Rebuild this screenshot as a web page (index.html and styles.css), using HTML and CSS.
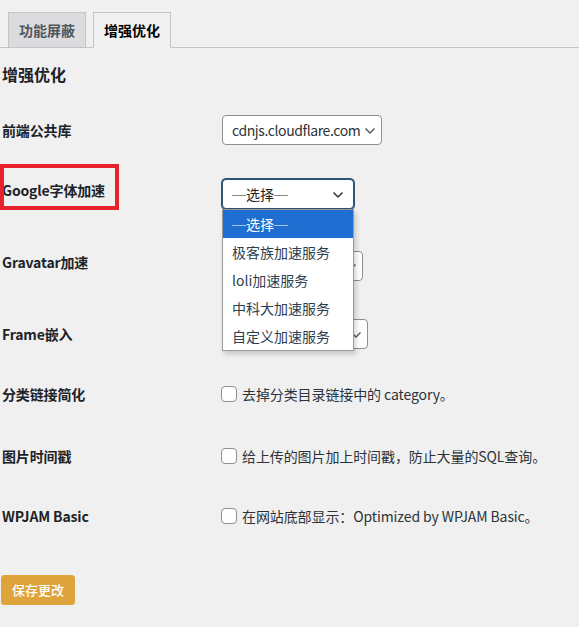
FILE: index.html
```html
<!DOCTYPE html>
<html lang="zh-CN">
<head>
<meta charset="utf-8">
<title>增强优化</title>
<link rel="stylesheet" href="styles.css">
</head>
<body>
<div class="wrap">
  <nav class="nav-tabs">
    <a class="nav-tab">功能屏蔽</a>
    <a class="nav-tab active">增强优化</a>
  </nav>
  <h2 class="section-title">增强优化</h2>
  <div class="form">
    <div class="row h60">
      <div class="label">前端公共库</div>
      <div class="field">
        <div class="select w160"><span class="tight">cdnjs.cloudflare.com</span><svg class="chev" width="12" height="8" viewBox="0 0 12 8"><polyline points="1.5,1.5 6,6 10.5,1.5" fill="none" stroke="#50575e" stroke-width="1.4"/></svg></div>
      </div>
    </div>
    <div class="row h72 marked">
      <div class="label">Google字体加速</div>
      <div class="field low">
        <div class="select w132 focused"><span><span class="dash">─</span>选择<span class="dash">─</span></span><svg class="chev" width="12" height="8" viewBox="0 0 12 8"><polyline points="1.5,1.5 6,6 10.5,1.5" fill="none" stroke="#2c3338" stroke-width="1.5"/></svg>
          <ul class="dropdown">
            <li class="selected"><span class="dash">─</span>选择<span class="dash">─</span></li>
            <li>极客族加速服务</li>
            <li>loli加速服务</li>
            <li>中科大加速服务</li>
            <li>自定义加速服务</li>
          </ul>
        </div>
      </div>
      <div class="highlight-box"></div>
    </div>
    <div class="row h72">
      <div class="label">Gravatar加速</div>
      <div class="field low">
        <div class="select w141"><svg class="chev" width="12" height="8" viewBox="0 0 12 8"><polyline points="1.5,1.5 6,6 10.5,1.5" fill="none" stroke="#50575e" stroke-width="1.4"/></svg></div>
      </div>
    </div>
    <div class="row h60">
      <div class="label">Frame嵌入</div>
      <div class="field">
        <div class="select w146"><svg class="chev" width="12" height="8" viewBox="0 0 12 8"><polyline points="1.5,1.5 6,6 10.5,1.5" fill="none" stroke="#50575e" stroke-width="1.4"/></svg></div>
      </div>
    </div>
    <div class="row h62">
      <div class="label">分类链接简化</div>
      <div class="field check">
        <span class="checkbox"></span><span class="check-text">去掉分类目录链接中的 category。</span>
      </div>
    </div>
    <div class="row h60">
      <div class="label">图片时间戳</div>
      <div class="field check">
        <span class="checkbox"></span><span class="check-text">给上传的图片加上时间戳，防止大量的SQL查询。</span>
      </div>
    </div>
    <div class="row h60">
      <div class="label">WPJAM Basic</div>
      <div class="field check">
        <span class="checkbox"></span><span class="check-text">在网站底部显示：Optimized by WPJAM Basic。</span>
      </div>
    </div>
  </div>
  <div class="submit">
    <button class="button-primary">保存更改</button>
  </div>
</div>
</body>
</html>
```

FILE: styles.css
```css
* { box-sizing: border-box; }

html, body {
  margin: 0;
  padding: 0;
  background: #f0f0f1;
}

body {
  font-family: "Noto Sans CJK SC", "Noto Sans", sans-serif;
  font-size: 14px;
  color: #1d2327;
  width: 579px;
  height: 627px;
  overflow: hidden;
}

.wrap {
  padding-left: 2px;
}

.nav-tabs {
  display: flex;
  padding-top: 12px;
  margin-left: -2px;
  border-bottom: 1px solid #c3c4c7;
}

.nav-tab {
  display: block;
  height: 36px;
  margin-bottom: -1px;
  margin-left: 8px;
  padding: 5px 10px;
  line-height: 24px;
  font-size: 14px;
  font-weight: 700;
  color: #50575e;
  background: #dcdcde;
  border: 1px solid #c3c4c7;
}

.nav-tab + .nav-tab {
  margin-left: 7px;
}

.nav-tab.active {
  background: #f0f0f1;
  color: #000;
  border-bottom-color: #f0f0f1;
}

.section-title {
  margin: 14px 0 0;
  font-size: 16px;
  line-height: 24px;
  font-weight: 700;
  color: #1d2327;
}

.form {
  margin-top: 15px;
}

.row {
  position: relative;
  display: flex;
}

.h60 { height: 60px; }
.h62 { height: 62px; }
.h72 { height: 72px; }

.label {
  width: 220px;
  padding-top: 20px;
  line-height: 18px;
  font-weight: 700;
  color: #1d2327;
  white-space: nowrap;
  letter-spacing: -0.15px;
}

.field {
  padding-top: 14px;
}

.field.low {
  padding-top: 18px;
}

.select {
  position: relative;
  display: flex;
  align-items: center;
  height: 30px;
  padding: 0 24px 0 9px;
  border: 1px solid #8c8f94;
  border-radius: 4px;
  background: #fff;
  color: #2c3338;
  line-height: 28px;
  white-space: nowrap;
}

.tight {
  letter-spacing: -0.4px;
}

.dash {
  font-weight: 400;
}

.select .chev {
  position: absolute;
  right: 5px;
  top: 11px;
}

.w160 { width: 160px; }
.w132 { width: 132px; }
.w141 { width: 141px; }
.w146 { width: 146px; }

.select.focused {
  border-color: #2e5475;
  box-shadow: 0 0 0 1px #2e5475;
  color: #1d2327;
}

.select.focused .chev {
  right: 9px;
}

.dropdown {
  position: absolute;
  z-index: 5;
  top: 29px;
  left: -1px;
  width: 132px;
  margin: 0;
  padding: 0;
  list-style: none;
  background: #fff;
  border: 1px solid #9a9a9a;
  box-shadow: 2px 3px 5px rgba(0, 0, 0, 0.18);
}

.dropdown li {
  height: 28px;
  line-height: 28px;
  padding-left: 9px;
  color: #2c3e50;
  white-space: nowrap;
}

.dropdown li.selected {
  background: #1e6fd1;
  color: #fff;
}

.highlight-box {
  position: absolute;
  left: -2px;
  top: 3px;
  width: 119px;
  height: 46px;
  border: 4px solid #e8222b;
  pointer-events: none;
}

.field.check {
  display: flex;
  align-items: center;
  align-self: flex-start;
  padding-top: 20px;
  line-height: 18px;
}

.checkbox {
  display: block;
  width: 16px;
  height: 16px;
  margin-left: -1px;
  margin-right: 5px;
  border: 1px solid #8c8f94;
  border-radius: 4px;
  background: #fff;
}

.check-text {
  color: #2c3338;
  white-space: nowrap;
  letter-spacing: -0.1px;
}

.submit {
  padding-top: 28px;
}

.button-primary {
  display: block;
  margin-left: -1px;
  height: 30px;
  padding: 0 10px;
  border: 1px solid #dfa33c;
  border-radius: 3px;
  background: #dfa33c;
  color: #fff;
  font-family: "Noto Sans CJK SC", "Noto Sans", sans-serif;
  font-size: 13px;
  font-weight: 500;
  line-height: 28px;
}
```
